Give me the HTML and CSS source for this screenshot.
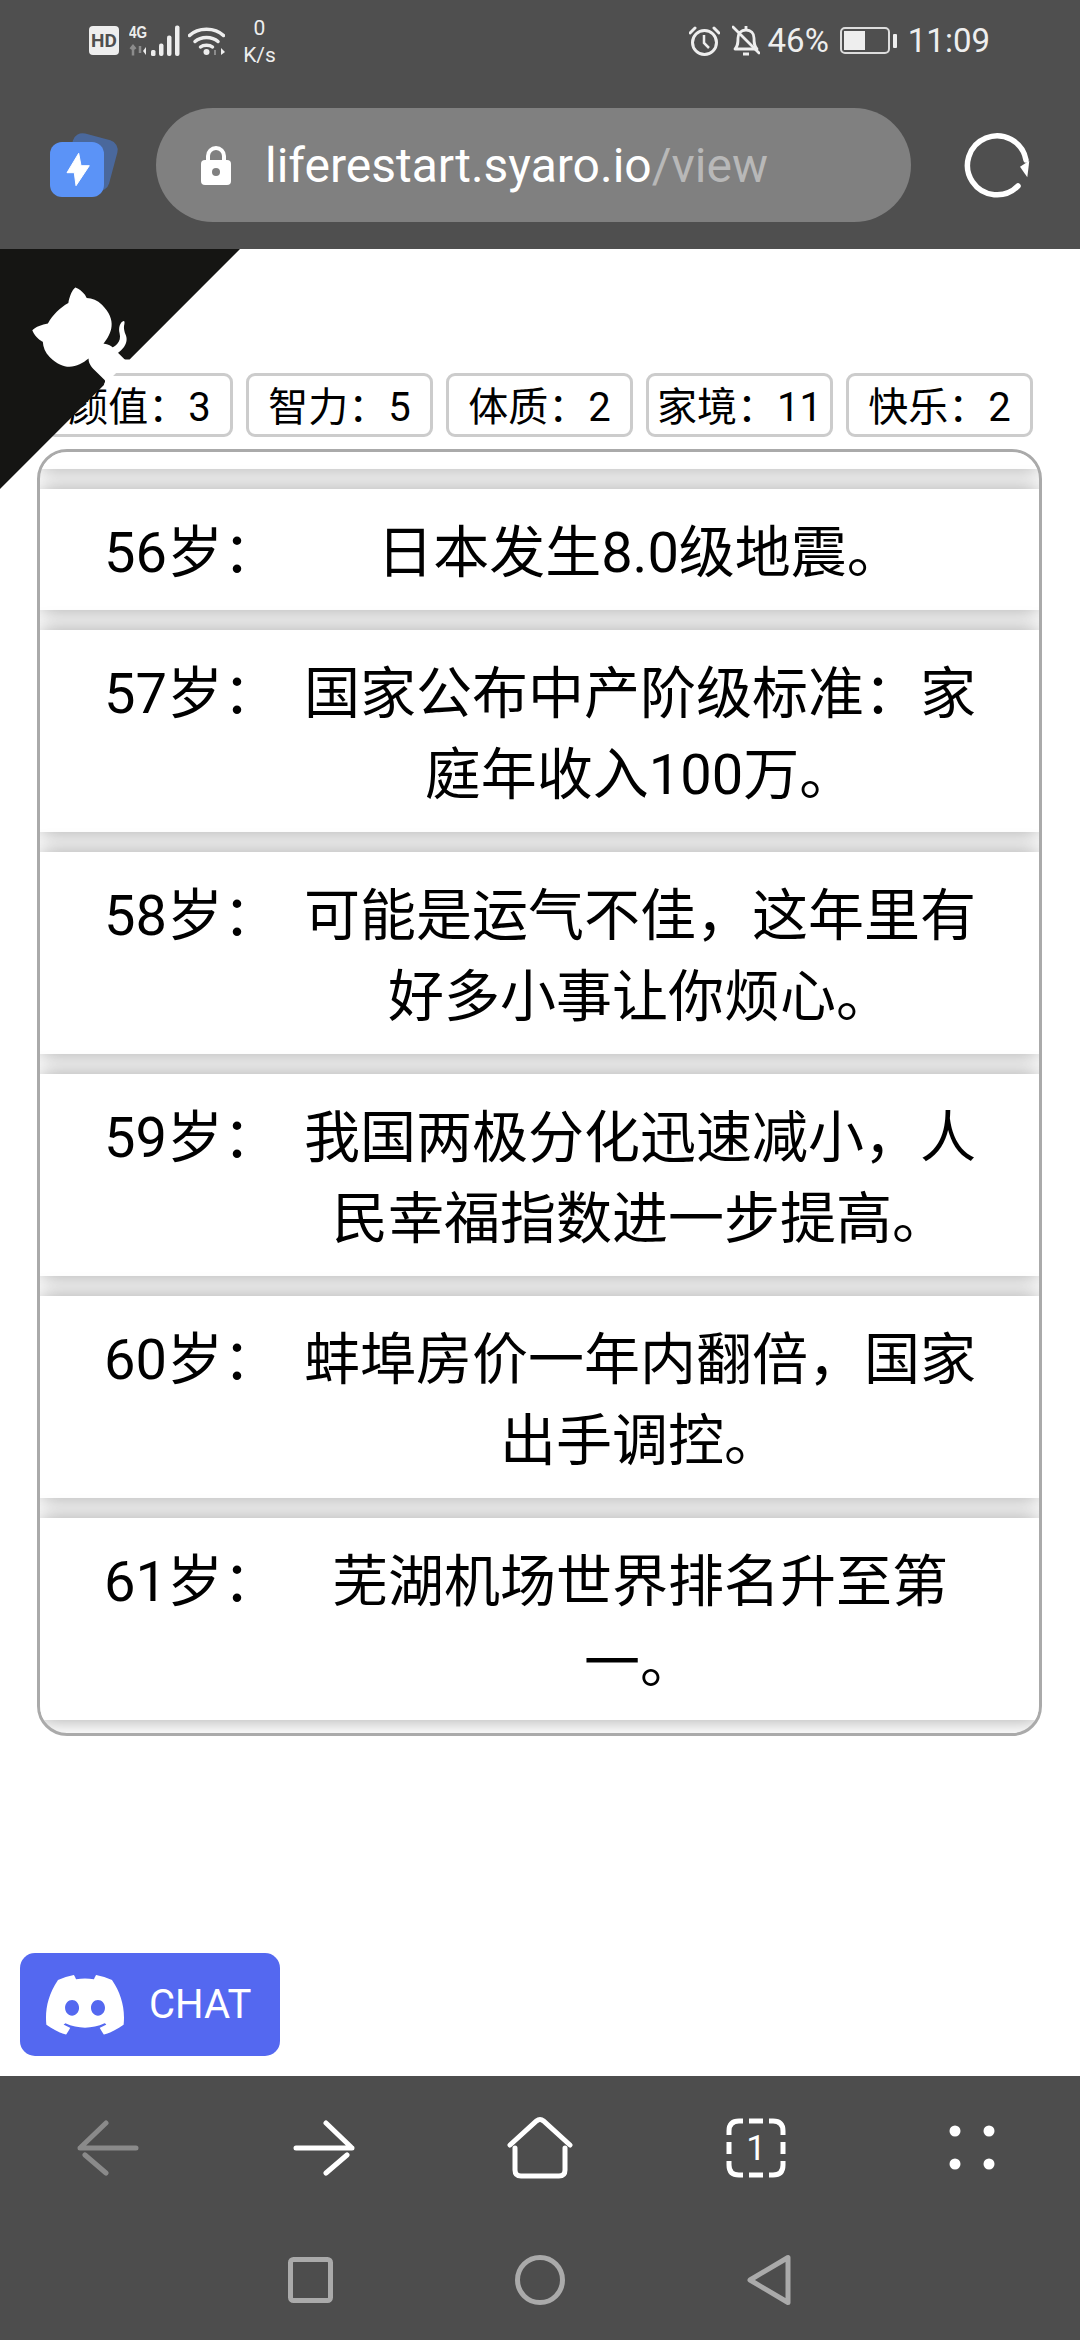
FILE: index.html
```html
<!DOCTYPE html>
<html lang="zh">
<head>
<meta charset="utf-8">
<title>人生重开模拟器</title>
<link rel="stylesheet" href="styles.css">
</head>
<body>
<div class="phone">
  <header class="top">
    <div class="status">
      <div class="status-left">
        <span class="hd">HD</span>
        <svg class="signal" width="51" height="32" viewBox="0 0 51 32">
          <text x="0" y="13" class="net" textLength="18" lengthAdjust="spacingAndGlyphs">4G</text>
          <path d="M4 30.500v-9M1.500 24l2.500-3 2.500 3M11 21v7" fill="none" stroke="#8c8c8c" stroke-width="2.500"/>
          <path d="M14 26l3 4v-8z" fill="#eee"/>
          <g fill="#eee"><rect x="22" y="25" width="4.500" height="6" rx="1.500"/><rect x="30" y="18.500" width="4.500" height="12.500" rx="2"/><rect x="38" y="10.500" width="4.500" height="20.500" rx="2"/><rect x="46" y="0.500" width="4.500" height="30.500" rx="2"/></g>
        </svg>
        <svg class="wifi" width="37" height="30" viewBox="0 0 37 30">
          <g fill="none" stroke="#eee" stroke-width="3.500" stroke-linecap="round"><path d="M1.500 9.500C10 1 27 1 35.500 9.500"/><path d="M7 15.500C13 10 24 10 30 15.500"/><path d="M12.500 21C15.500 18.500 21.500 18.500 24.500 21"/></g>
          <circle cx="18.500" cy="26" r="3" fill="#eee"/>
          <path d="M27 24v5" stroke="#8c8c8c" stroke-width="2"/><path d="M33 22v7l4-3z" fill="#eee"/>
        </svg>
        <div class="speed"><span>0</span><span>K/s</span></div>
      </div>
      <div class="status-right">
        <svg width="31" height="30" viewBox="0 0 31 30" fill="none" stroke="#eee" stroke-width="3">
          <circle cx="15.500" cy="16.500" r="12"/><path d="M15 9v8l5 5" stroke-width="2.500"/><path d="M1 7l5-5M30 7l-5-5" stroke-linecap="round"/>
        </svg>
        <svg class="bell" width="28" height="31" viewBox="0 0 28 31" fill="none" stroke="#eee" stroke-width="2.800">
          <path d="M3 24c3-3 3-6 3-11 0-5 3-8 8-8s8 3 8 8c0 5 0 8 3 11z" stroke-linejoin="round"/><path d="M11 29h6M14 1v3"/><path d="M1 2l26 26" stroke-linecap="round"/>
        </svg>
        <span class="pct">46%</span>
        <div class="battery"><div class="cell"><div class="fill"></div></div><div class="tip"></div></div>
        <span class="time">11:09</span>
      </div>
    </div>
    <div class="toolbar">
      <svg class="app" width="70" height="68" viewBox="0 0 70 68">
        <rect x="18" y="6" width="46" height="52" rx="10" fill="#4a689c" transform="rotate(15 41 32)"/>
        <rect x="0" y="12" width="54" height="55" rx="12" fill="#5b93f7"/>
        <path d="M28.700 23.300 17 42.700h7.300L26 55.700l13.300-20H31z" fill="#fff" stroke="#fff" stroke-linejoin="round"/>
      </svg>
      <div class="pill">
        <svg width="30" height="40" viewBox="0 0 30 40">
          <path d="M7 17v-6a8 8 0 0 1 16 0v6" fill="none" stroke="#fff" stroke-width="4"/>
          <rect y="15" width="30" height="25" rx="4" fill="#fff"/><circle cx="15" cy="27" r="4" fill="#808080"/>
        </svg>
        <span class="url">liferestart.syaro.io<span class="path">/view</span></span>
      </div>
      <svg class="reload" width="70" height="70" viewBox="0 0 70 70">
        <path d="M56 56A29.500 29.500 0 1 1 64 30" fill="none" stroke="#fff" stroke-width="5.500" stroke-linecap="round"/>
        <path d="M58 36.700 67.300 30.700 65.300 47.300z" fill="#fff"/>
      </svg>
    </div>
  </header>

  <main class="page">
    <a class="corner">
      <svg width="240" height="240" viewBox="0 0 250 250">
        <g transform="matrix(-1 0 0 1 250 0)">
          <path fill="#151513" d="M0,0 L115,115 L130,115 L142,142 L250,250 L250,0 Z"/>
          <path fill="#fff" d="M128.3,109.0 C113.8,99.7 119.0,89.6 119.0,89.6 C122.0,82.7 120.5,78.6 120.5,78.6 C119.2,72.0 123.4,76.3 123.4,76.3 C127.3,80.9 125.5,87.3 125.5,87.3 C122.9,97.6 130.6,101.9 134.4,103.2"/>
          <path fill="#fff" d="M115.0,115.0 C114.9,115.1 118.7,116.5 119.8,115.4 L133.7,101.6 C136.9,99.2 139.9,98.4 142.2,98.6 C133.8,88.0 127.5,74.4 143.8,58.0 C148.5,53.4 154.0,51.2 159.7,51.0 C160.3,49.4 163.2,43.6 171.4,40.1 C171.4,40.1 176.1,42.5 178.8,56.2 C183.1,58.6 187.2,61.8 190.9,65.4 C194.5,69.0 197.7,73.2 200.1,77.6 C213.8,80.2 216.3,84.9 216.3,84.9 C212.7,93.1 206.9,96.0 205.4,96.6 C205.1,102.4 203.0,107.8 198.3,112.5 C181.9,128.9 168.3,122.5 157.7,114.1 C157.9,116.9 156.7,120.9 152.7,124.9 L141.0,136.5 C139.8,137.7 141.6,141.9 141.8,141.8 Z"/>
        </g>
      </svg>
    </a>

    <div class="tags">
      <div class="tag">颜值：3</div>
      <div class="tag">智力：5</div>
      <div class="tag">体质：2</div>
      <div class="tag">家境：11</div>
      <div class="tag">快乐：2</div>
    </div>

    <ul class="log">
      <li class="spacer"></li>
      <li class="row"><span class="age">56岁：</span><span class="event">日本发生8.0级地震。</span></li>
      <li class="row"><span class="age">57岁：</span><span class="event">国家公布中产阶级标准：家庭年收入100万。</span></li>
      <li class="row"><span class="age">58岁：</span><span class="event">可能是运气不佳，这年里有好多小事让你烦心。</span></li>
      <li class="row"><span class="age">59岁：</span><span class="event">我国两极分化迅速减小，人民幸福指数进一步提高。</span></li>
      <li class="row"><span class="age">60岁：</span><span class="event">蚌埠房价一年内翻倍，国家出手调控。</span></li>
      <li class="row"><span class="age">61岁：</span><span class="event">芜湖机场世界排名升至第一。</span></li>
    </ul>

    <a class="chat">
      <svg width="78" height="60" viewBox="0 2.850 24 18.400" fill="#fff">
        <path d="M20.317 4.3698a19.7913 19.7913 0 00-4.8851-1.5152.0741.0741 0 00-.0785.0371c-.211.3753-.4447.8648-.6083 1.2495-1.8447-.2762-3.68-.2762-5.4868 0-.1636-.3933-.4058-.8742-.6177-1.2495a.077.077 0 00-.0785-.037 19.7363 19.7363 0 00-4.8852 1.515.0699.0699 0 00-.0321.0277C.5334 9.0458-.319 13.5799.0992 18.0578a.0824.0824 0 00.0312.0561c2.0528 1.5076 4.0413 2.4228 5.9929 3.0294a.0777.0777 0 00.0842-.0276c.4616-.6304.8731-1.2952 1.226-1.9942a.076.076 0 00-.0416-.1057c-.6528-.2476-1.2743-.5495-1.8722-.8923a.077.077 0 01-.0076-.1277c.1258-.0943.2517-.1923.3718-.2914a.0743.0743 0 01.0776-.0105c3.9278 1.7933 8.18 1.7933 12.0614 0a.0739.0739 0 01.0785.0095c.1202.099.246.1981.3728.2924a.077.077 0 01-.0066.1276 12.2986 12.2986 0 01-1.873.8914.0766.0766 0 00-.0407.1067c.3604.698.7719 1.3628 1.225 1.9932a.076.076 0 00.0842.0286c1.961-.6067 3.9495-1.5219 6.0023-3.0294a.077.077 0 00.0313-.0552c.5004-5.177-.8382-9.6739-3.5485-13.6604a.061.061 0 00-.0312-.0286zM8.02 15.3312c-1.1825 0-2.1569-1.0857-2.1569-2.419 0-1.3332.9555-2.4189 2.157-2.4189 1.2108 0 2.1757 1.0952 2.1568 2.419 0 1.3332-.9555 2.4189-2.1569 2.4189zm7.9748 0c-1.1825 0-2.1569-1.0857-2.1569-2.419 0-1.3332.9554-2.4189 2.1569-2.4189 1.2108 0 2.1757 1.0952 2.1568 2.419 0 1.3332-.946 2.4189-2.1568 2.4189Z"/>
      </svg>
      <span>CHAT</span>
    </a>
  </main>

  <footer class="bottom">
    <div class="browser-nav">
      <div class="slot">
        <svg width="62" height="56" viewBox="0 0 62 56" fill="none" stroke="#8a8a8a" stroke-width="5" stroke-linecap="round">
          <path d="M3 28H59M29 3 4 27M8 35 29 53"/>
        </svg>
      </div>
      <div class="slot">
        <svg width="62" height="56" viewBox="0 0 62 56" fill="none" stroke="#fff" stroke-width="5" stroke-linecap="round">
          <path d="M59 28H3M33 3 58 27M54 35 33 53"/>
        </svg>
      </div>
      <div class="slot">
        <svg width="66" height="64" viewBox="0 0 66 64" fill="none" stroke="#fff" stroke-width="5" stroke-linecap="round">
          <path d="M3 29 29.500 5Q33 2 36.500 5L63 29"/><path d="M8 32V54Q8 60 14 60H52Q58 60 58 54V32"/>
        </svg>
      </div>
      <div class="slot">
        <svg width="60" height="60" viewBox="0 0 60 60" fill="none" stroke="#fff" stroke-width="5">
          <path d="M3 17V13Q3 3 13 3H17M23 3H37M43 3H47Q57 3 57 13V17M57 24V36M57 43V47Q57 57 47 57H43M37 57H23M17 57H13Q3 57 3 47V43M3 36V24"/>
          <text x="30" y="42" class="tab-count">1</text>
        </svg>
      </div>
      <div class="slot">
        <svg width="46" height="46" viewBox="0 0 46 46" fill="#fff">
          <circle cx="6" cy="6" r="5.500"/><circle cx="40" cy="6" r="5.500"/><circle cx="6" cy="39" r="5.500"/><circle cx="40" cy="39" r="5.500"/>
        </svg>
      </div>
    </div>
    <div class="system-nav">
      <svg width="45" height="46" viewBox="0 0 45 46" fill="none" stroke="#aaa" stroke-width="5"><rect x="2.500" y="2.500" width="40" height="41" rx="3"/></svg>
      <svg width="50" height="50" viewBox="0 0 50 50" fill="none" stroke="#aaa" stroke-width="5"><circle cx="25" cy="25" r="22.500"/></svg>
      <svg width="46" height="52" viewBox="0 0 46 52" fill="none" stroke="#aaa" stroke-width="5" stroke-linejoin="round"><path d="M41 3.500V48.500L3 26Z"/></svg>
    </div>
  </footer>
</div>
</body>
</html>
```
FILE: styles.css
```css
* { box-sizing: border-box; }
html, body { margin: 0; padding: 0; }
body { font-family: Roboto, "Noto Sans CJK SC", sans-serif; background: #fff; color: #000; }
.phone { width: 1080px; height: 2340px; display: flex; flex-direction: column; overflow: hidden; }

.top { background: #4f4f4f; height: 249px; flex: none; }
.status { height: 81px; display: flex; justify-content: space-between; align-items: center; padding: 0 90px 0 89px; color: #eee; }
.status-left, .status-right { display: flex; align-items: center; }
.hd { width: 30px; height: 29px; border-radius: 4px; background: #eee; color: #4f4f4f; font-size: 19px; font-weight: 700; line-height: 29px; text-align: center; margin-right: 10px; }
.net { font-family: "Liberation Sans", sans-serif; font-size: 16px; font-weight: 700; fill: #eee; }
.signal { margin-right: 8px; }
.wifi { margin-right: 18px; }
.speed { display: flex; flex-direction: column; align-items: center; font-size: 21px; line-height: 27px; width: 33px; margin-top: 2px; }
.status-right { gap: 12px; }
.bell { margin-right: -4px; }
.pct, .time { font-size: 33px; line-height: 40px; }
.battery { display: flex; align-items: center; gap: 3px; margin-left: -1px; }
.cell { width: 50px; height: 27px; border: 2px solid #ddd; border-radius: 5px; padding: 2px; }
.fill { width: 21px; height: 100%; background: #eee; }
.tip { width: 4px; height: 14px; background: #eee; border-radius: 1px; }
.time { margin-left: -1px; }

.toolbar { height: 168px; display: flex; align-items: center; padding-left: 50px; }
.app { flex: none; margin-right: 36px; margin-top: -2px; }
.pill { width: 755px; height: 114px; flex: none; border-radius: 57px; background: #808080; display: flex; align-items: center; padding-left: 45px; gap: 34px; }
.url { color: #fff; font-size: 48px; white-space: nowrap; }
.path { color: #b8b8b8; }
.reload { flex: none; margin-left: 51px; }

.page { flex: 1; position: relative; padding: 124px 38px 0 37px; background: #fff; }
.corner { position: absolute; left: 0; top: 0; z-index: 2; display: block; line-height: 0; }
.tags { display: grid; grid-template-columns: repeat(5, 1fr); gap: 13px; padding: 0 9px; }
.tag { height: 64px; border: 3px solid #ccc; border-radius: 9px; font-size: 40px; line-height: 63px; text-align: center; white-space: nowrap; }

.log { list-style: none; margin: 12px 0 0; padding: 0 0 13px; border: 3px solid #aaa; border-radius: 30px; overflow: hidden; display: flex; flex-direction: column; gap: 20px; }
.log li { background: #fff; box-shadow: 0 0 20px rgba(0, 0, 0, .36); }
.spacer { height: 17px; }
.row { display: flex; padding: 24px 47px 16px 64px; font-size: 56px; line-height: 81px; }
.age { width: 184px; flex: none; }
.event { flex: 1; text-align: center; }

.chat { position: absolute; left: 20px; bottom: 20px; width: 260px; height: 103px; border-radius: 15px; background: #5468f0; color: #fff; display: flex; align-items: center; padding-left: 26px; gap: 25px; font-size: 40px; }

.bottom { height: 264px; flex: none; background: #4d4d4d; }
.browser-nav { height: 144px; display: grid; grid-template-columns: repeat(5, 1fr); }
.slot { display: flex; align-items: center; justify-content: center; }
.tab-count { font-family: Roboto, sans-serif; font-size: 35px; font-weight: 400; fill: #fff; stroke: none; text-anchor: middle; }
.system-nav { height: 120px; display: flex; align-items: center; justify-content: center; gap: 182px; }
```
